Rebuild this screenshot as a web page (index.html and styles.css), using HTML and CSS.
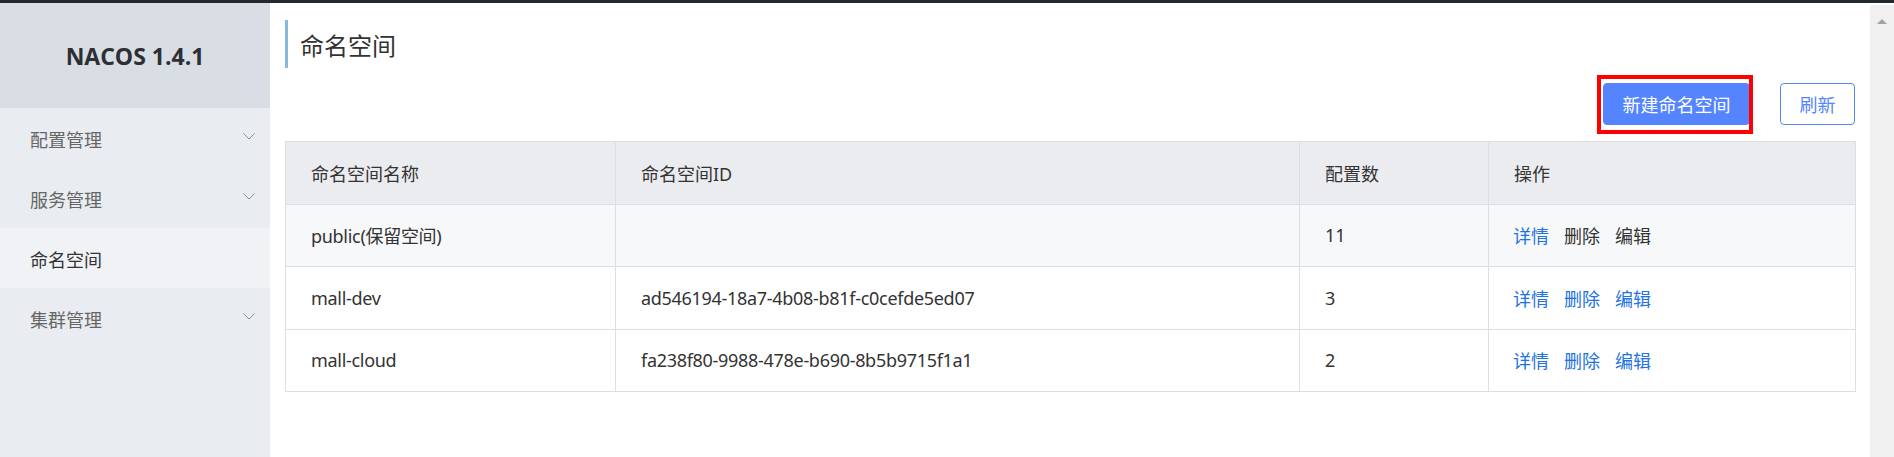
FILE: index.html
```html
<!DOCTYPE html>
<html lang="zh-CN">
<head>
<meta charset="utf-8">
<title>Nacos - 命名空间</title>
<link rel="stylesheet" href="styles.css">
</head>
<body>
<div class="topbar"></div>
<div class="layout">
  <aside class="sidebar">
    <div class="brand">NACOS 1.4.1</div>
    <ul class="menu">
      <li class="menu-item"><span>配置管理</span><svg class="chev" width="12" height="7" viewBox="0 0 12 7"><polyline points="0.5,0.5 6,6 11.5,0.5" fill="none" stroke="#8a8e96" stroke-width="1"/></svg></li>
      <li class="menu-item"><span>服务管理</span><svg class="chev" width="12" height="7" viewBox="0 0 12 7"><polyline points="0.5,0.5 6,6 11.5,0.5" fill="none" stroke="#8a8e96" stroke-width="1"/></svg></li>
      <li class="menu-item active"><span>命名空间</span></li>
      <li class="menu-item"><span>集群管理</span><svg class="chev" width="12" height="7" viewBox="0 0 12 7"><polyline points="0.5,0.5 6,6 11.5,0.5" fill="none" stroke="#8a8e96" stroke-width="1"/></svg></li>
    </ul>
  </aside>
  <main class="main">
    <h1 class="page-title">命名空间</h1>
    <div class="toolbar">
      <span class="mark"><button class="btn btn-primary">新建命名空间</button></span>
      <button class="btn btn-normal">刷新</button>
    </div>
    <table class="grid">
      <colgroup>
        <col class="c1"><col class="c2"><col class="c3"><col class="c4">
      </colgroup>
      <thead>
        <tr><th>命名空间名称</th><th>命名空间ID</th><th>配置数</th><th>操作</th></tr>
      </thead>
      <tbody>
        <tr class="odd">
          <td class="latin">public(保留空间)</td><td class="latin"></td><td>11</td>
          <td><a class="link">详情</a><a class="link dim">删除</a><a class="link dim">编辑</a></td>
        </tr>
        <tr>
          <td class="latin">mall-dev</td><td class="latin">ad546194-18a7-4b08-b81f-c0cefde5ed07</td><td>3</td>
          <td><a class="link">详情</a><a class="link">删除</a><a class="link">编辑</a></td>
        </tr>
        <tr>
          <td class="latin">mall-cloud</td><td class="latin">fa238f80-9988-478e-b690-8b5b9715f1a1</td><td>2</td>
          <td><a class="link">详情</a><a class="link">删除</a><a class="link">编辑</a></td>
        </tr>
      </tbody>
    </table>
  </main>
  <div class="scrollbar"><span class="arrow"></span></div>
</div>
</body>
</html>
```

FILE: styles.css
```css
* { box-sizing: border-box; }
html, body { margin: 0; padding: 0; }
body {
  width: 1894px;
  height: 457px;
  overflow: hidden;
  background: #fff;
  font-family: "Noto Sans", "Noto Sans CJK SC", sans-serif;
  color: #333;
  display: flex;
  flex-direction: column;
}
.topbar { height: 3px; background: #23272e; flex: none; }
.layout { flex: 1; display: flex; min-height: 0; }

.sidebar { width: 270px; flex: none; background: #e9ecf1; display: flex; flex-direction: column; }
.brand {
  height: 105px;
  background: #d9dee5;
  display: flex; align-items: center; justify-content: center;
  font-family: "Open Sans", "Noto Sans", sans-serif;
  font-weight: 700; font-size: 23px; color: #2c2f33;
}
.menu { list-style: none; margin: 0; padding: 0; }
.menu-item {
  height: 60px;
  display: flex; align-items: center; justify-content: space-between;
  padding: 1px 15px 0 30px;
  font-size: 18px; color: #666;
}
.menu-item .chev { margin-top: -4px; }
.menu-item.active { background: #f0f2f5; color: #333; }

.main { flex: 1; min-width: 0; padding: 17px 15px 0 15px; }
.page-title {
  margin: 0;
  height: 48px;
  border-left: 3px solid #88b7e0;
  padding-left: 12px;
  display: flex; align-items: center;
  font-size: 24px; font-weight: 400; color: #333;
}
.toolbar { margin-top: 15px; display: flex; justify-content: flex-end; gap: 30px; }
.mark { position: relative; display: flex; }
.mark::after {
  content: "";
  position: absolute;
  left: -6px; top: -8px; right: -3px; bottom: -9px;
  border: 4px solid #ff0000;
  pointer-events: none;
}
.btn {
  height: 42px;
  border-radius: 4px;
  font-family: "Noto Sans", "Noto Sans CJK SC", sans-serif;
  font-size: 18px;
  padding: 0;
  cursor: pointer;
}
.btn-primary { width: 147px; background: #5584ff; border: 1px solid #5584ff; color: #fff; }
.btn-normal { width: 75px; background: #fff; border: 1px solid #5584ff; color: #5584ff; }

.grid {
  margin-top: 16px;
  width: 1570px;
  border-collapse: collapse;
  table-layout: fixed;
  font-size: 18px;
  border: 1px solid #dcdee3;
}
.grid col.c1 { width: 330px; }
.grid col.c2 { width: 684px; }
.grid col.c3 { width: 189px; }
.grid col.c4 { width: 367px; }
.grid th, .grid td {
  height: 62.5px;
  padding: 0 0 0 25px;
  text-align: left;
  border: 1px solid #dcdee3;
  font-weight: 400;
  color: #333;
  white-space: nowrap;
}
.grid td.latin { letter-spacing: -0.3px; }
.grid td:last-child { padding-left: 24px; }
.grid th { background: #ebecf0; }
.grid tr.odd td { background: #f7f8fa; }
.link { color: #2272e3; margin-right: 15px; cursor: pointer; }
.link.dim { color: #333; }

.scrollbar { width: 24px; flex: none; background: #f0f0f0; margin-top: 2px; display: flex; justify-content: center; padding-top: 14px; }
.arrow { width: 0; height: 0; border-left: 5px solid transparent; border-right: 5px solid transparent; border-bottom: 5px solid #a3a3a3; }
```
